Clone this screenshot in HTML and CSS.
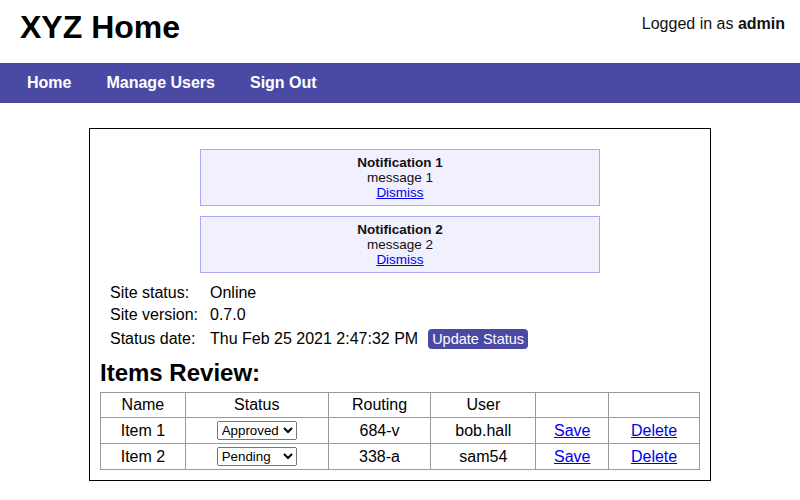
FILE: index.html
```html
<!DOCTYPE html>
<html>
<head>
<meta charset="utf-8">
<link rel="stylesheet" href="styles.css">
</head>
<body>
<header class="top">
  <h1 class="title">XYZ Home</h1>
  <div class="login">Logged in as <b>admin</b></div>
</header>
<nav class="nav">
  <a class="nav-link" href="#">Home</a>
  <a class="nav-link" href="#">Manage Users</a>
  <a class="nav-link" href="#">Sign Out</a>
</nav>
<main class="main">
  <div class="notes">
    <div class="note">
      <div class="note-title">Notification 1</div>
      <div>message 1</div>
      <a href="#" class="note-link">Dismiss</a>
    </div>
    <div class="note">
      <div class="note-title">Notification 2</div>
      <div>message 2</div>
      <a href="#" class="note-link">Dismiss</a>
    </div>
  </div>
  <div class="info">
    <div class="info-label">Site status:</div><div class="info-value">Online</div>
    <div class="info-label">Site version:</div><div class="info-value">0.7.0</div>
    <div class="info-label">Status date:</div><div class="info-value info-date"><span>Thu Feb 25 2021 2:47:32 PM</span><button class="btn">Update Status</button></div>
  </div>
  <h2 class="heading">Items Review:</h2>
  <table class="items">
    <colgroup>
      <col class="c1"><col class="c2"><col class="c3"><col class="c4"><col class="c5"><col class="c6">
    </colgroup>
    <tr class="head"><th>Name</th><th>Status</th><th>Routing</th><th>User</th><th></th><th></th></tr>
    <tr><td>Item 1</td><td><select class="sel"><option>Approved</option><option>Pending</option></select></td><td>684-v</td><td>bob.hall</td><td><a href="#">Save</a></td><td><a href="#">Delete</a></td></tr>
    <tr><td>Item 2</td><td><select class="sel"><option>Approved</option><option selected>Pending</option></select></td><td>338-a</td><td>sam54</td><td><a href="#">Save</a></td><td><a href="#">Delete</a></td></tr>
  </table>
</main>
</body>
</html>
```
FILE: styles.css
```css
* { box-sizing: border-box; }
html, body { margin: 0; padding: 0; background: #fff; }
body { font-family: "Liberation Sans", Arial, sans-serif; font-size: 16px; color: #000; }
.top { display: flex; justify-content: space-between; align-items: flex-start; height: 63px; padding: 0 15px 0 20px; }
.title { margin: 9px 0 0; font-size: 32px; font-weight: bold; line-height: 37px; }
.login { margin-top: 15px; color: #111; }
.nav { display: flex; height: 40px; align-items: center; background: #4a4aa5; padding-left: 9.5px; }
.nav-link { color: #fff; font-weight: bold; text-decoration: none; padding: 0 17.5px; }
.main { width: 622px; margin: 25px auto 0; border: 1px solid #000; padding: 10px; }
.notes { display: flex; flex-direction: column; align-items: center; gap: 10px; margin-top: 10px; }
.note { width: 400px; background: #f0f0ff; border: 1px solid #a8a8ff; padding: 5px; text-align: center; font-size: 13.5px; line-height: 15px; color: #111; }
.note-title { font-weight: bold; }
.note-link { color: #00e; }
.info { display: grid; grid-template-columns: 100px auto; align-items: center; margin: 9px 0 0 10px; line-height: 22px; }
.info-date { display: flex; align-items: center; gap: 10px; }
.btn { font-family: inherit; font-size: 14.5px; background: #4a4aa5; color: #fff; border: none; border-radius: 4px; padding: 1px 4px; height: 20px; line-height: 18px; margin: 3px 0; }
.heading { margin: 7px 0 5px; font-size: 24px; line-height: 28px; }
.items { width: 600px; border-collapse: collapse; text-align: center; }
.items th, .items td { border: 1px solid #999; padding: 2px 3px; font-weight: normal; height: 25px; }
.items td { height: 26px; }
.items a { color: #00e; }
.c1 { width: 85px; } .c2 { width: 143px; } .c3 { width: 103px; } .c4 { width: 105px; } .c5 { width: 73px; } .c6 { width: 91px; }
.sel { width: 80px; height: 19px; font-family: inherit; font-size: 13.33px; vertical-align: middle; padding: 0; }
```
